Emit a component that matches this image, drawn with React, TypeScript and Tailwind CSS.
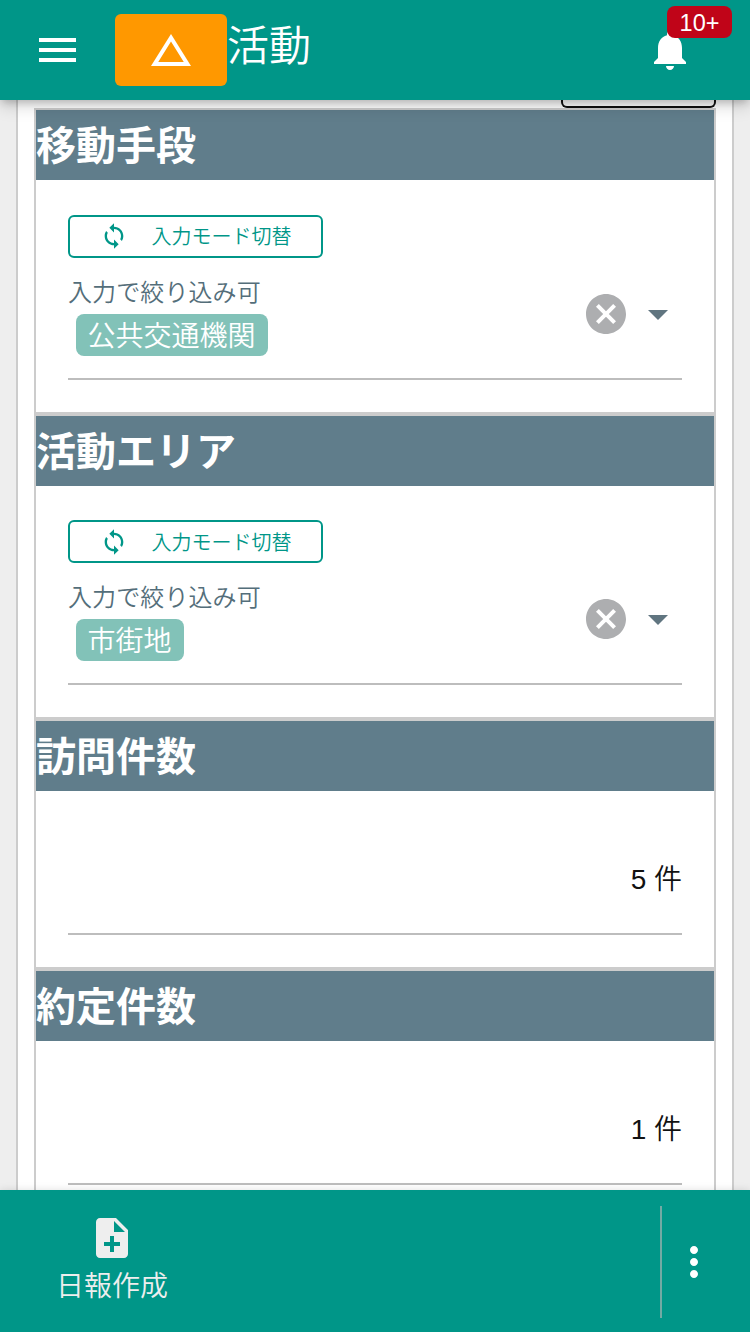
import React from 'react';

interface IconProps {
  path: string;
  className?: string;
}

function Icon({ path, className = 'size-12' }: IconProps) {
  return (
    <svg viewBox="0 0 24 24" fill="currentColor" className={`shrink-0 ${className}`} aria-hidden="true">
      <path d={path} />
    </svg>
  );
}

const icons = {
  triangle: 'M12 7.77L18.39 18H5.61L12 7.77M12 4L2 20h20L12 4z',
  bell: 'M12 22c1.1 0 2-.9 2-2h-4c0 1.1.89 2 2 2zm6-6v-5c0-3.07-1.64-5.64-4.5-6.32V4c0-.83-.67-1.5-1.5-1.5s-1.5.67-1.5 1.5v.68C7.63 5.36 6 7.92 6 11v5l-2 2v1h16v-1l-2-2z',
  sync: 'M12 4V1L8 5l4 4V6c3.31 0 6 2.69 6 6 0 1.01-.25 1.97-.7 2.8l1.46 1.46C19.54 15.03 20 13.57 20 12c0-4.42-3.58-8-8-8zm0 14c-3.31 0-6-2.69-6-6 0-1.01.25-1.97.7-2.8L5.24 7.74C4.46 8.97 4 10.43 4 12c0 4.42 3.58 8 8 8v3l4-4-4-4v3z',
  cancel: 'M12 2C6.47 2 2 6.47 2 12s4.47 10 10 10 10-4.47 10-10S17.53 2 12 2zm5 13.59L15.59 17 12 13.41 8.41 17 7 15.59 10.59 12 7 8.41 8.41 7 12 10.59 15.59 7 17 8.41 13.41 12 17 15.59z',
  dropDown: 'M7 10l5 5 5-5z',
  noteAdd: 'M14 2H6c-1.1 0-1.99.9-1.99 2L4 20c0 1.1.89 2 1.99 2H18c1.1 0 2-.9 2-2V8l-6-6zm2 14h-3v3h-2v-3H8v-2h3v-3h2v3h3v2zm-3-7V3.5L18.5 9H13z',
  more: 'M12 8c1.1 0 2-.9 2-2s-.9-2-2-2-2 .9-2 2 .9 2 2 2zm0 2c-1.1 0-2 .9-2 2s.9 2 2 2 2-.9 2-2-.9-2-2-2zm0 6c-1.1 0-2 .9-2 2s.9 2 2 2 2-.9 2-2-.9-2-2-2z',
};

function Header() {
  return (
    <header className="relative z-10 flex h-[100px] shrink-0 bg-[#009688] text-white shadow-[0_4px_8px_-2px_rgba(0,0,0,0.2),0_6px_16px_rgba(0,0,0,0.16)]">
      <button className="mt-[38px] ml-[39px] flex h-6 w-[37px] flex-col justify-between">
        <span className="h-1 w-full bg-white" />
        <span className="h-1 w-full bg-white" />
        <span className="h-1 w-full bg-white" />
      </button>
      <div className="mt-3.5 ml-[39px] flex h-[72px] w-28 items-center justify-center rounded-md bg-[#ff9800]">
        <Icon path={icons.triangle} />
      </div>
      <h1 className="mt-[17px] text-[42px] leading-[60px] font-[350]">活動</h1>
      <button className="relative mt-[26px] mr-14 ml-auto size-12">
        <Icon path={icons.bell} />
        <span className="absolute -top-5 left-[21px] h-8 w-[65px] rounded-lg bg-[#c00418] text-center text-[23.5px] leading-[34px]">
          10+
        </span>
      </button>
    </header>
  );
}

interface SectionProps {
  title: string;
  className: string;
  children: React.ReactNode;
}

function Section({ title, className, children }: SectionProps) {
  return (
    <section className={`shrink-0 border-2 border-[#ccc] ${className}`}>
      <h2 className="h-[70px] bg-[#607d8b] text-[40px] leading-[72px] font-bold text-white">{title}</h2>
      <div className="px-8">{children}</div>
    </section>
  );
}

function SelectField({ value }: { value: string }) {
  return (
    <div className="pt-[34.5px]">
      <button className="flex h-[43px] w-[255px] items-center rounded-md border-2 border-[#009688] pl-[30px] text-xl font-[350] text-[#009688]">
        <Icon path={icons.sync} className="size-7" />
        <span className="ml-[23.5px] pt-0.5">入力モード切替</span>
      </button>
      <div className="flex h-[122px] border-b-2 border-[#bdbdbd]">
        <div className="pt-5">
          <p className="text-2xl leading-[30px] font-[350] tracking-[0.1px] text-[#546e7a]">入力で絞り込み可</p>
          <span className="mt-1.5 ml-2 inline-block h-[42px] rounded-lg bg-[#82c2b8] pr-3 pl-[11.5px] text-[28px] leading-[45px] font-[350] text-white">
            {value}
          </span>
        </div>
        <div className="mt-8 ml-auto flex gap-1">
          <Icon path={icons.cancel} className="size-12 text-[#adaeb0]" />
          <Icon path={icons.dropDown} className="size-12 text-[#607580]" />
        </div>
      </div>
    </div>
  );
}

function CountField({ value }: { value: number }) {
  return (
    <div className="h-36 border-b-2 border-[#bdbdbd] pt-[68px] text-right text-[28px] leading-[42px] font-[350] text-[#111]">
      {value} 件
    </div>
  );
}

function Footer() {
  return (
    <footer className="relative z-10 flex h-[142px] shrink-0 bg-[#009688] text-[#eee] shadow-[0_0_8px_rgba(0,0,0,0.12)]">
      <button className="ml-14 flex flex-col items-center self-start pt-6">
        <Icon path={icons.noteAdd} />
        <span className="mt-1 text-[28px] leading-[42px] font-[350]">日報作成</span>
      </button>
      <button className="mt-4 mb-3.5 ml-auto flex w-[90px] items-center border-l-2 border-[#73aaa4] pl-2 text-white">
        <Icon path={icons.more} />
      </button>
    </footer>
  );
}

export default function App() {
  return (
    <div className="flex h-screen flex-col overflow-hidden bg-[#eee] font-['Liberation_Sans','Noto_Sans_CJK_JP',sans-serif]">
      <Header />
      <main className="mx-4 flex min-h-0 flex-1 flex-col overflow-hidden border-x-2 border-[#ccc] bg-white px-4">
        <div className="ml-auto h-2 w-[155px] shrink-0 rounded-b-md border-x-2 border-b-2 border-[#111] bg-white" />
        <Section title="移動手段" className="h-[305.5px]">
          <SelectField value="公共交通機関" />
        </Section>
        <Section title="活動エリア" className="h-[305.5px]">
          <SelectField value="市街地" />
        </Section>
        <Section title="訪問件数" className="h-[250px]">
          <CountField value={5} />
        </Section>
        <Section title="約定件数" className="h-[250px]">
          <CountField value={1} />
        </Section>
      </main>
      <Footer />
    </div>
  );
}
